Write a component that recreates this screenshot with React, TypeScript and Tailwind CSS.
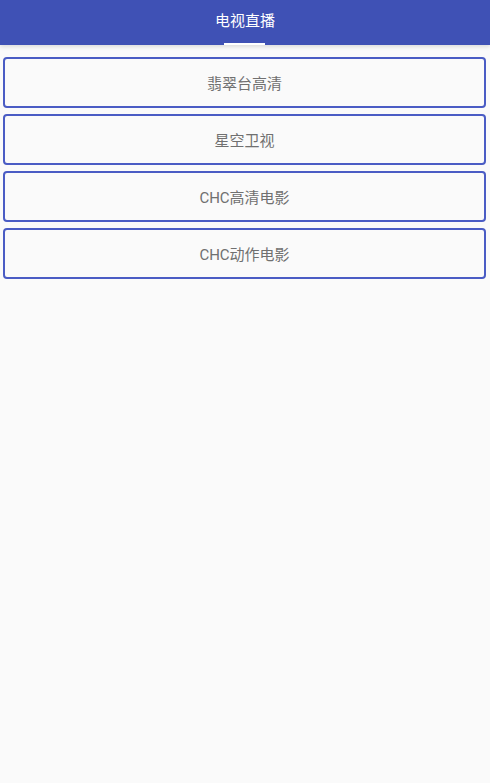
import React from 'react';

const channels = ['翡翠台高清', '星空卫视', 'CHC高清电影', 'CHC动作电影'];

export default function App() {
  return (
    <div
      className="min-h-[783px] w-full bg-[#fafafa]"
      style={{ fontFamily: 'Roboto, "Noto Sans CJK SC", sans-serif' }}
    >
      {/* Top tab bar */}
      <div className="relative h-[45px] bg-[#3f51b5] shadow-[0_2px_4px_rgba(0,0,0,0.12)]">
        <div className="flex h-[43px] items-center justify-center text-[15px] text-white">电视直播</div>
        <div className="absolute bottom-0 left-[224px] h-[2px] w-[41px] bg-white" />
      </div>

      {/* Channel list */}
      <div className="flex flex-col gap-[6px] pl-[3px] pr-[4px] pt-[12px]">
        {channels.map(name => (
          <button
            key={name}
            className="flex h-[51px] w-full items-center justify-center rounded-[4px] border-2 border-[#4a5cc4] bg-[#fafafa] pt-[3px] text-[15px] text-[#707070]"
          >
            {name}
          </button>
        ))}
      </div>
    </div>
  );
}
